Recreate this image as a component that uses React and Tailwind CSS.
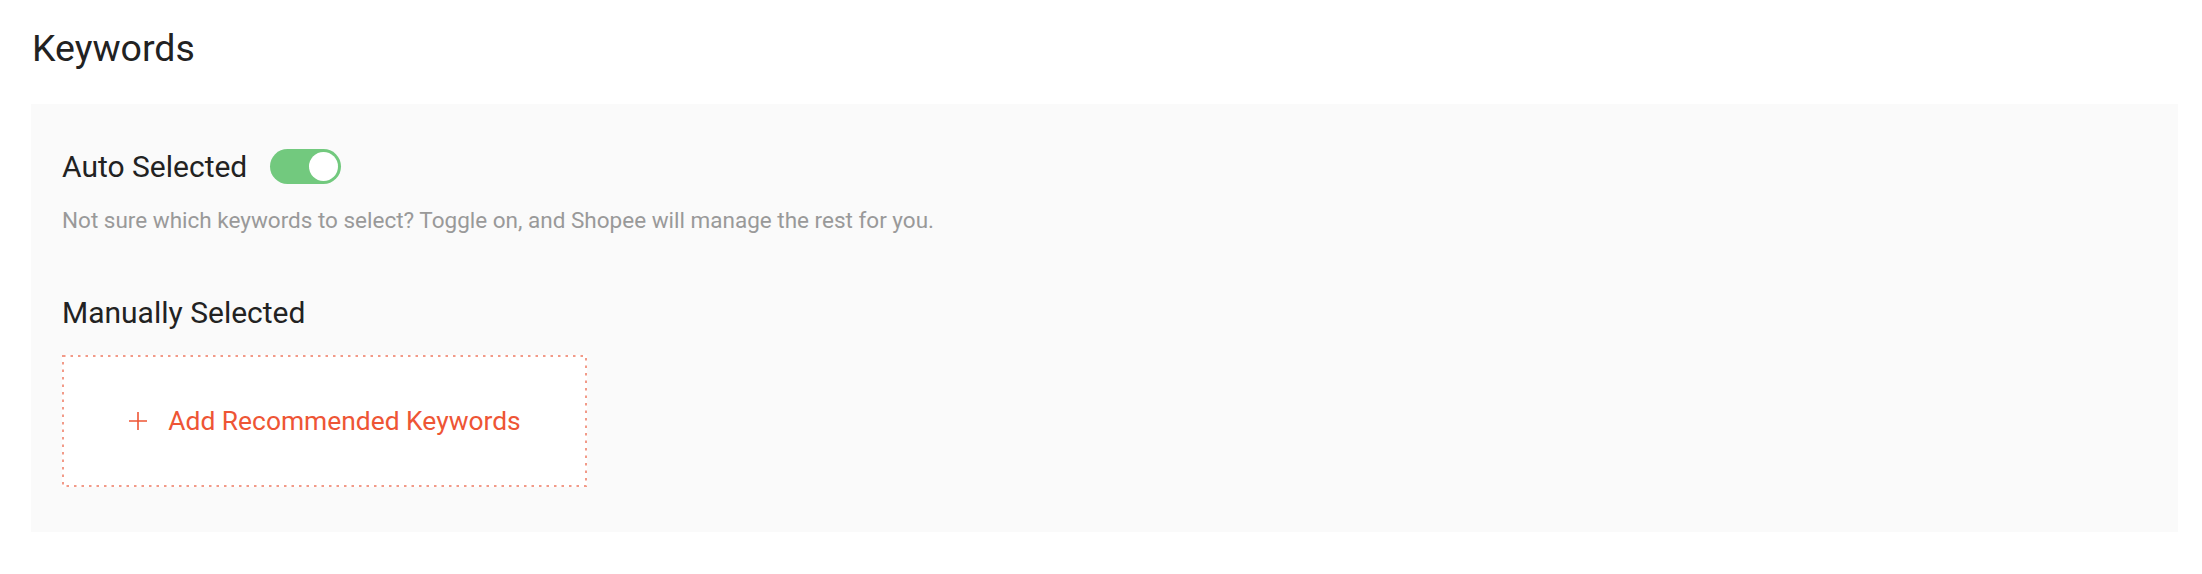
import React from "react";

export default function App() {
  return (
    <div className="w-[2202px] h-[574px] bg-white" style={{ fontFamily: "Roboto, 'Liberation Sans', sans-serif" }}>
      <div className="pl-[32px] pt-[28px] text-[37.5px] leading-[40px] text-[#222222] mb-[36px]">Keywords</div>
      <div className="ml-[31px] w-[2147px] h-[428px] bg-[#fafafa] px-[31px]">
        <div className="pt-[45px] flex items-center gap-[23px]">
          <span className="text-[30px] leading-[35px] text-[#222222]">Auto Selected</span>
          <button className="relative w-[71px] h-[35px] rounded-full bg-[#72c97e] flex items-center justify-end pr-[3px]">
            <span className="block w-[29px] h-[29px] rounded-full bg-white"></span>
          </button>
        </div>
        <div className="mt-[24px] text-[22.5px] leading-[24px] text-[#999999]">
          Not sure which keywords to select? Toggle on, and Shopee will manage the rest for you.
        </div>
        <div className="mt-[64px] text-[30px] leading-[34px] text-[#222222]">Manually Selected</div>
        <div className="relative mt-[25px] w-[525px] h-[132px] bg-white flex items-center justify-center gap-[20px] text-[#ee5535]">
          <svg className="absolute inset-0" width="525" height="132" viewBox="0 0 525 132">
            <rect x="1" y="1" width="523" height="130" fill="none" stroke="#f29a88" strokeWidth="2" strokeDasharray="2.5 5" />
          </svg>
          <svg width="20" height="20" viewBox="0 0 20 20">
            <path d="M10 1V19M1 10H19" stroke="#ee5535" strokeWidth="1.6" fill="none" />
          </svg>
          <span className="text-[26.4px] leading-[30px]">Add Recommended Keywords</span>
        </div>
      </div>
    </div>
  );
}
